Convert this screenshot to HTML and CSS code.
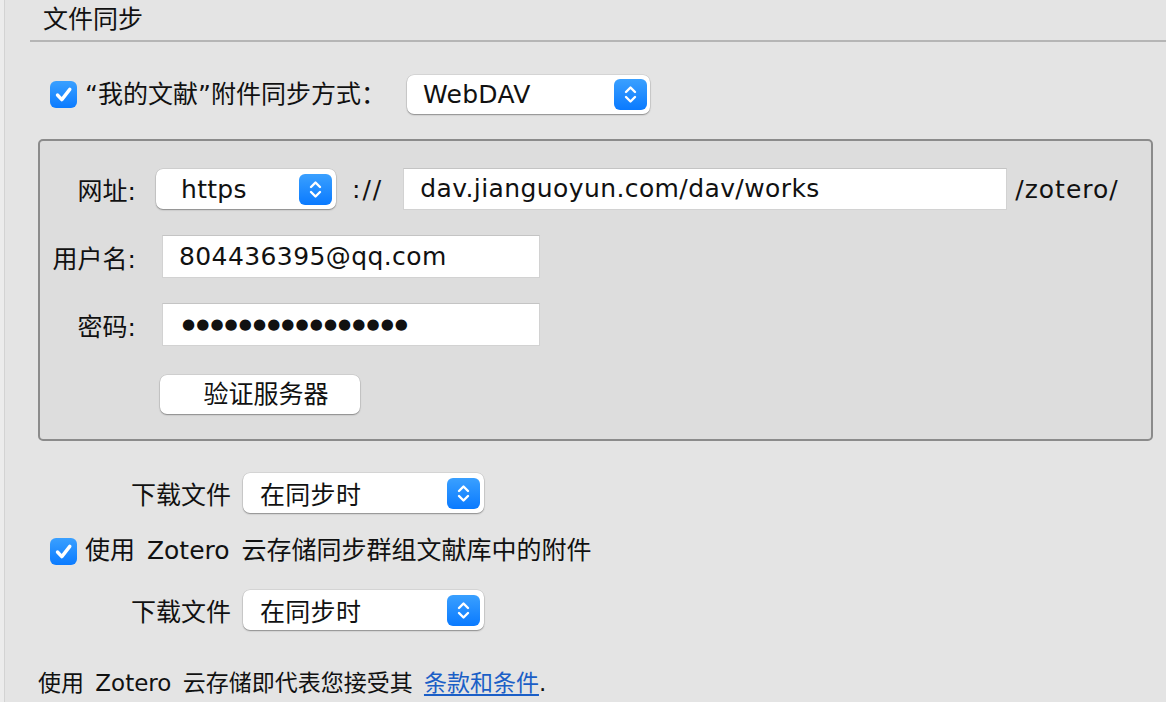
FILE: index.html
```html
<!DOCTYPE html>
<html lang="zh-CN">

<head>
  <meta charset="UTF-8">
  <meta name="viewport" content="width=device-width, initial-scale=1.0">
  <title>文件同步</title>
  <link rel="stylesheet" href="styles.css">
</head>

<body>
  <div class="pane">
    <div class="header">
      <h2 class="title">文件同步</h2>
    </div>

    <!-- 我的文献 -->
    <div class="row row-method">
      <span class="check"><svg viewBox="0 0 27 27" width="27" height="27"><path d="M7.5 14 L11.8 18.6 L19.8 8.4" fill="none" stroke="#fff" stroke-width="3.4" stroke-linecap="round" stroke-linejoin="round"/></svg></span>
      <span class="check-label">“我的文献”附件同步方式：</span>
      <div class="select select-method">
        <span class="select-text">WebDAV</span>
        <span class="stepper"><svg viewBox="0 0 33 31" width="33" height="31"><path d="M12 13 L16.5 8.5 L21 13 M12 18 L16.5 22.5 L21 18" fill="none" stroke="#fff" stroke-width="2.4" stroke-linecap="round" stroke-linejoin="round"/></svg></span>
      </div>
    </div>

    <div class="box">
      <div class="field">
        <span class="label">网址:</span>
        <div class="select select-proto">
          <span class="select-text">https</span>
          <span class="stepper"><svg viewBox="0 0 33 31" width="33" height="31"><path d="M12 13 L16.5 8.5 L21 13 M12 18 L16.5 22.5 L21 18" fill="none" stroke="#fff" stroke-width="2.4" stroke-linecap="round" stroke-linejoin="round"/></svg></span>
        </div>
        <span class="sep">://</span>
        <div class="input input-url">dav.jianguoyun.com/dav/works</div>
        <span class="suffix">/zotero/</span>
      </div>

      <div class="field">
        <span class="label">用户名:</span>
        <div class="input input-short">804436395@qq.com</div>
      </div>

      <div class="field">
        <span class="label">密码:</span>
        <div class="input input-short input-pass">●●●●●●●●●●●●●●●●</div>
      </div>

      <div class="field field-btn">
        <span class="label"></span>
        <div class="button">验证服务器</div>
      </div>
    </div>

    <div class="row row-download row-download-first">
      <span class="dl-label">下载文件</span>
      <div class="select select-dl">
        <span class="select-text">在同步时</span>
        <span class="stepper"><svg viewBox="0 0 33 31" width="33" height="31"><path d="M12 13 L16.5 8.5 L21 13 M12 18 L16.5 22.5 L21 18" fill="none" stroke="#fff" stroke-width="2.4" stroke-linecap="round" stroke-linejoin="round"/></svg></span>
      </div>
    </div>

    <div class="row row-group">
      <span class="check"><svg viewBox="0 0 27 27" width="27" height="27"><path d="M7.5 14 L11.8 18.6 L19.8 8.4" fill="none" stroke="#fff" stroke-width="3.4" stroke-linecap="round" stroke-linejoin="round"/></svg></span>
      <span class="check-label">使用 Zotero 云存储同步群组文献库中的附件</span>
    </div>

    <div class="row row-download">
      <span class="dl-label">下载文件</span>
      <div class="select select-dl">
        <span class="select-text">在同步时</span>
        <span class="stepper"><svg viewBox="0 0 33 31" width="33" height="31"><path d="M12 13 L16.5 8.5 L21 13 M12 18 L16.5 22.5 L21 18" fill="none" stroke="#fff" stroke-width="2.4" stroke-linecap="round" stroke-linejoin="round"/></svg></span>
      </div>
    </div>

    <p class="terms">使用 Zotero 云存储即代表您接受其 <a href="#" class="link">条款和条件</a>.</p>
  </div>
</body>

</html>
```

FILE: styles.css
```css
* {
  margin: 0;
  padding: 0;
  box-sizing: border-box;
}

body {
  background: #e4e4e4;
  font-family: "DejaVu Sans", "Noto Sans CJK SC", sans-serif;
  font-size: 25px;
  color: #111;
  overflow: hidden;
  border-left: 4px solid #ececec;
  word-spacing: 4px;
}

.pane {
  border-left: 1px solid #d3d3d3;
  height: 702px;
  padding-left: 25px;
}

.header {
  height: 42px;
  border-bottom: 2px solid #b5b5b5;
}

.title {
  font-weight: normal;
  font-size: 25px;
  line-height: 40px;
  padding-left: 13px;
}

.row {
  display: flex;
  align-items: center;
}

.row-method {
  margin-top: 33px;
  height: 39px;
}

/* --------勾選框--------- */
.check {
  width: 27px;
  height: 27px;
  border-radius: 6px;
  background: linear-gradient(#3aa0ff, #0b7bff);
  margin-left: 20px;
  display: block;
  flex: none;
}

.check svg {
  display: block;
}

.check-label {
  margin-left: 8px;
  line-height: 30px;
}

/* --------下拉選單--------- */
.select {
  display: flex;
  align-items: center;
  justify-content: space-between;
  background: #fff;
  border-radius: 7px;
  box-shadow: 0 1px 1.5px rgba(0, 0, 0, 0.35), 0 0 0 0.5px rgba(0, 0, 0, 0.12);
  padding-right: 3px;
  flex: none;
}

.stepper {
  width: 33px;
  height: 31px;
  border-radius: 6px;
  background: linear-gradient(#3aa0ff, #0a7aff);
  display: block;
}

.stepper svg {
  display: block;
}

.select-text {
  letter-spacing: 0.3px;
}

.select-method {
  margin-left: 21px;
  width: 243px;
  height: 39px;
  padding-left: 16px;
}

.select-proto {
  width: 180px;
  height: 40px;
  padding-left: 25px;
  padding-right: 4px;
}

.select-dl {
  width: 241px;
  height: 40px;
  padding-left: 17px;
  padding-right: 4px;
}

/* --------設定框--------- */
.box {
  margin-top: 25px;
  margin-left: 8px;
  margin-right: 13px;
  border: 2px solid #8b8b8b;
  border-radius: 5px;
  background: #dddddd;
  padding: 27px 0 25px;
  display: flex;
  flex-direction: column;
  gap: 25px;
}

.field {
  display: flex;
  align-items: center;
  height: 43px;
}

.field:first-child {
  height: 42px;
}

.field-btn {
  height: 39px;
  margin-top: 4px;
}

.label {
  width: 96px;
  text-align: right;
  margin-right: 20px;
  flex: none;
}

.sep {
  margin-left: 16px;
  letter-spacing: 2px;
}

.input {
  background: #fff;
  border: 1px solid #d2d2d2;
  border-top-color: #c4c4c4;
  height: 43px;
  line-height: 41px;
  padding-left: 16px;
  white-space: nowrap;
  letter-spacing: 0.4px;
}

.input-url {
  margin-left: 20px;
  width: 604px;
  height: 42px;
  line-height: 40px;
}

.suffix {
  margin-left: 8px;
  letter-spacing: 1px;
}

.input-short {
  margin-left: 6px;
  width: 378px;
}

.input-pass {
  font-size: 15px;
  letter-spacing: 1.1px;
  padding-left: 19px;
}

.button {
  margin-left: 4px;
  width: 200px;
  height: 39px;
  line-height: 39px;
  text-align: center;
  background: #fff;
  border-radius: 7px;
  box-shadow: 0 1px 1.5px rgba(0, 0, 0, 0.35), 0 0 0 0.5px rgba(0, 0, 0, 0.12);
  padding-left: 12px;
}

/* --------下載--------- */
.row-download {
  margin-top: 25px;
  height: 40px;
}

.row-download-first {
  margin-top: 32px;
}

.dl-label {
  margin-left: 101px;
  margin-right: 12px;
}

.row-group {
  margin-top: 24px;
  height: 28px;
}

.terms {
  margin-top: 40px;
  margin-left: 8px;
  font-size: 23px;
  line-height: 26px;
}

.link {
  color: #1b5fc7;
  text-decoration: underline;
  text-underline-offset: 3px;
}
```
